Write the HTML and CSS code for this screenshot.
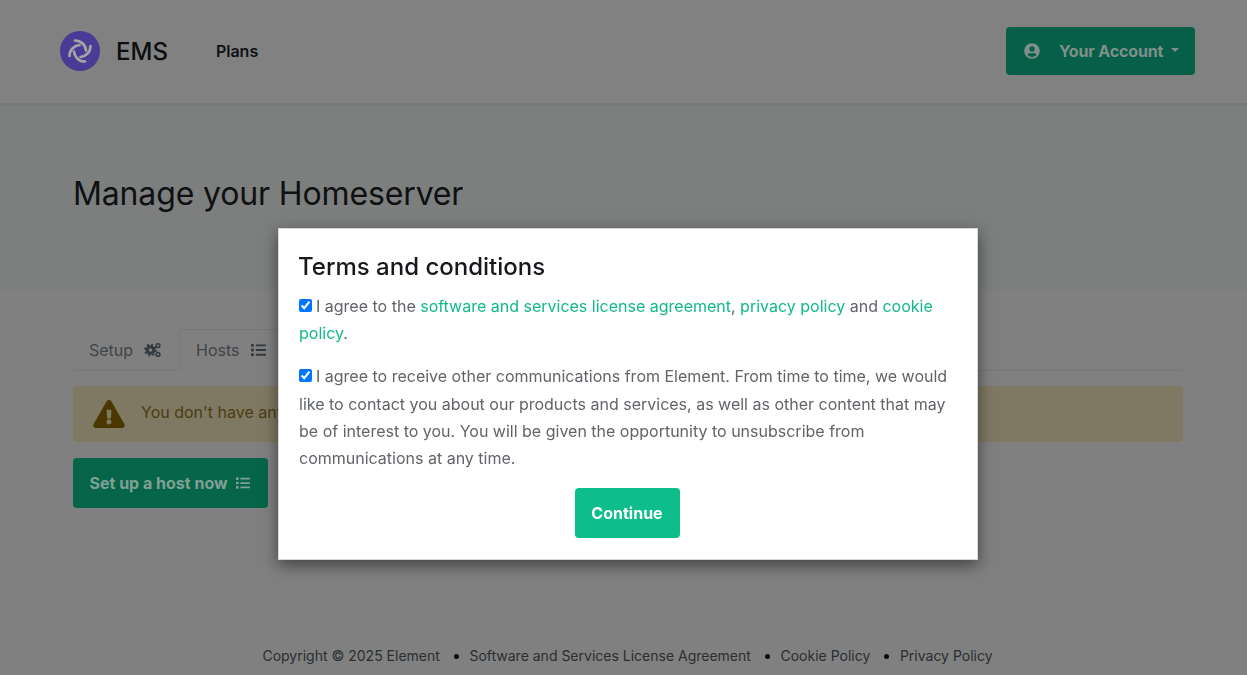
FILE: index.html
```html
<!DOCTYPE html>
<html lang="en">
<head>
<meta charset="utf-8">
<title>Manage your Homeserver</title>
<link rel="stylesheet" href="styles.css">
</head>
<body>
<div class="page">
  <header class="topbar">
    <a class="brand" href="#">
      <svg class="logo" viewBox="0 0 40 40"><circle cx="20" cy="20" r="20" fill="#4c3b96"/><g fill="none" stroke="#a5a5a5" stroke-width="2.7" stroke-linecap="round"><path d="M15 9.5A11 11 0 0 1 26 19.5"/><path d="M30.5 15A11 11 0 0 1 20.5 26"/><path d="M25 30.5A11 11 0 0 1 14 20.5"/><path d="M9.5 25A11 11 0 0 1 19.5 14"/></g></svg>
      <span class="brand-name">EMS</span>
    </a>
    <a class="nav-link" href="#">Plans</a>
    <button class="account" type="button">
      <svg class="user-icon" viewBox="0 0 496 512"><path fill="currentColor" d="M248 8C111 8 0 119 0 256s111 248 248 248 248-111 248-248S385 8 248 8zm0 96c48.6 0 88 39.4 88 88s-39.4 88-88 88-88-39.4-88-88 39.4-88 88-88zm0 344c-58.7 0-111.3-26.6-146.5-68.2 18.8-35.4 55.6-59.8 98.5-59.8 2.4 0 4.8.4 7.1 1.1 13 4.2 26.6 6.9 40.9 6.9 14.3 0 28-2.7 40.9-6.9 2.3-.7 4.7-1.1 7.1-1.1 42.9 0 79.7 24.4 98.5 59.8C359.3 421.4 306.7 448 248 448z"/></svg>
      <span class="account-label">Your Account</span>
      <i class="caret"></i>
    </button>
  </header>
  <section class="hero">
    <h1 class="title">Manage your Homeserver</h1>
  </section>
  <main class="content">
    <nav class="tabs">
      <a class="tab" href="#">Setup
        <svg class="tab-icon" viewBox="0 0 18 16"><g fill="none" stroke="#33393d"><circle cx="6.5" cy="8" r="3.3" stroke-width="3"/><circle cx="6.5" cy="8" r="5.4" stroke-width="2" stroke-dasharray="2 2.24"/><circle cx="14" cy="3.6" r="1.9" stroke-width="1.5"/><circle cx="14" cy="12.4" r="1.9" stroke-width="1.5"/></g></svg>
      </a>
      <a class="tab active" href="#">Hosts
        <svg class="tab-icon list" viewBox="0 0 512 512"><path fill="currentColor" d="M80 368H16a16 16 0 0 0-16 16v64a16 16 0 0 0 16 16h64a16 16 0 0 0 16-16v-64a16 16 0 0 0-16-16zm0-320H16A16 16 0 0 0 0 64v64a16 16 0 0 0 16 16h64a16 16 0 0 0 16-16V64a16 16 0 0 0-16-16zm0 160H16a16 16 0 0 0-16 16v64a16 16 0 0 0 16 16h64a16 16 0 0 0 16-16v-64a16 16 0 0 0-16-16zm416 176H176a16 16 0 0 0-16 16v32a16 16 0 0 0 16 16h320a16 16 0 0 0 16-16v-32a16 16 0 0 0-16-16zm0-320H176a16 16 0 0 0-16 16v32a16 16 0 0 0 16 16h320a16 16 0 0 0 16-16V80a16 16 0 0 0-16-16zm0 160H176a16 16 0 0 0-16 16v32a16 16 0 0 0 16 16h320a16 16 0 0 0 16-16v-32a16 16 0 0 0-16-16z"/></svg>
      </a>
    </nav>
    <div class="alert">
      <svg class="warn" viewBox="0 0 576 512"><path fill="currentColor" d="M569.517 440.013C587.975 472.007 564.806 512 527.94 512H48.054c-36.937 0-59.999-40.055-41.577-71.987L246.423 23.985c18.467-32.009 64.72-31.951 83.154 0l239.94 416.028zM288 354c-25.405 0-46 20.595-46 46s20.595 46 46 46 46-20.595 46-46-20.595-46-46-46zm-43.673-165.346l7.418 136c.347 6.364 5.609 11.346 11.982 11.346h48.546c6.373 0 11.635-4.982 11.982-11.346l7.418-136c.375-6.874-5.098-12.654-11.982-12.654h-63.383c-6.884 0-12.356 5.78-11.981 12.654z"/></svg>
      <span class="alert-text">You don't have any hosts yet.</span>
    </div>
    <button class="setup" type="button">Set up a host now
      <svg class="setup-icon" viewBox="0 0 512 512"><path fill="currentColor" d="M80 368H16a16 16 0 0 0-16 16v64a16 16 0 0 0 16 16h64a16 16 0 0 0 16-16v-64a16 16 0 0 0-16-16zm0-320H16A16 16 0 0 0 0 64v64a16 16 0 0 0 16 16h64a16 16 0 0 0 16-16V64a16 16 0 0 0-16-16zm0 160H16a16 16 0 0 0-16 16v64a16 16 0 0 0 16 16h64a16 16 0 0 0 16-16v-64a16 16 0 0 0-16-16zm416 176H176a16 16 0 0 0-16 16v32a16 16 0 0 0 16 16h320a16 16 0 0 0 16-16v-32a16 16 0 0 0-16-16zm0-320H176a16 16 0 0 0-16 16v32a16 16 0 0 0 16 16h320a16 16 0 0 0 16-16V80a16 16 0 0 0-16-16zm0 160H176a16 16 0 0 0-16 16v32a16 16 0 0 0 16 16h320a16 16 0 0 0 16-16v-32a16 16 0 0 0-16-16z"/></svg>
    </button>
  </main>
  <footer class="footer">
    <span>Copyright © 2025 Element</span><i class="dot"></i>
    <a href="#">Software and Services License Agreement</a><i class="dot"></i>
    <a href="#">Cookie Policy</a><i class="dot"></i>
    <a href="#">Privacy Policy</a>
  </footer>
</div>
<div class="overlay">
  <section class="modal">
    <h2 class="modal-title">Terms and conditions</h2>
    <p class="terms"><input class="check" type="checkbox" checked> I agree to the <a href="#">software and services license agreement</a>, <a href="#">privacy policy</a> and <a href="#">cookie policy</a>.</p>
    <p class="terms"><input class="check" type="checkbox" checked> I agree to receive other communications from Element. From time to time, we would like to contact you about our products and services, as well as other content that may be of interest to you. You will be given the opportunity to unsubscribe from communications at any time.</p>
    <div class="modal-actions"><button class="continue" type="button">Continue</button></div>
  </section>
</div>
</body>
</html>
```
FILE: styles.css
```css
* { box-sizing: border-box; }
html, body { margin: 0; height: 100%; overflow: hidden; }
body { background: #808080; font-family: Inter, "Liberation Sans", sans-serif; color: #101214; }
a { text-decoration: none; color: inherit; }
button { font-family: inherit; border: 0; }

.page { height: 675px; display: flex; flex-direction: column; }
.topbar { height: 105px; flex: none; display: flex; align-items: center; padding: 0 52px 1px 60px; border-bottom: 2px solid #74787a; background: #818181; }
.brand { display: flex; align-items: center; gap: 16px; }
.logo { width: 40px; height: 40px; display: block; }
.brand-name { font-size: 24px; font-weight: 500; color: #0c0e10; }
.nav-link { margin-left: 48px; font-size: 16px; font-weight: 600; color: #0f1113; }
.account { margin-left: auto; width: 189px; height: 48px; background: #065f46; color: #7f908b; border-radius: 4px; display: flex; align-items: center; padding: 0 18px; font-size: 16px; font-weight: 700; white-space: nowrap; }
.account-label { letter-spacing: -.15px; }
.user-icon { width: 16px; height: 16px; margin-right: 19px; flex: none; }
.caret { margin-left: 8px; margin-top: -2px; border-top: 4px solid currentColor; border-left: 4px solid transparent; border-right: 4px solid transparent; }

.hero { height: 185px; flex: none; padding: 70px 64px 0 73px; background: #7c7f7e; }
.title { margin: 0; font-size: 32px; line-height: 38px; font-weight: 400; letter-spacing: -.14px; color: #0e1012; }
.content { flex: 1; padding: 39px 64px 0 73px; }
.tabs { height: 42px; display: flex; border-bottom: 1px solid #74797c; }
.tab { display: flex; align-items: center; gap: 11px; padding: 0 16px 0 15px; height: 42px; font-size: 16px; color: #3f4448; border: 1px solid transparent; border-radius: 4px 4px 0 0; }
.tab.active { border-color: #74797c #74797c #808080; background: #808080; padding-left: 16px; }
.tab-icon { width: 18px; height: 16px; color: #33393d; }
.tab-icon.list { width: 15px; }
.alert { margin-top: 15px; height: 56px; display: flex; align-items: center; padding: 0 20px; gap: 16px; background: #7f7964; border-radius: 4px; color: #4a3c12; font-size: 16px; }
.alert-text { margin-bottom: 4px; }
.warn { width: 32px; height: 28px; color: #4a3800; }
.setup { margin-top: 16px; width: 195px; height: 50px; background: #066548; color: #80a096; border-radius: 4px; display: flex; align-items: center; padding: 0 16.5px; gap: 8px; font-size: 16px; font-weight: 700; white-space: nowrap; }
.setup-icon { width: 14px; height: 14px; flex: none; }

.footer { height: 38px; flex: none; display: flex; justify-content: center; gap: 12.3px; align-items: flex-start; padding: 10px 0 0 8px; font-size: 14px; color: #2a2e31; }
.dot { width: 5px; height: 5px; margin: 7px -1.5px 0 1.5px; border-radius: 50%; background: #0b0d0f; }

.overlay { position: fixed; inset: 0; padding: 228px 0 0 9px; display: flex; justify-content: center; align-items: flex-start; }
.modal { width: 700px; height: 332px; background: #fff; padding: 21px 20px; border: 1px solid #d8d8d8; box-shadow: 0 5px 15px rgba(0,0,0,.5); }
.modal-title { margin: 0 0 10px -1px; font-size: 24px; line-height: 33px; font-weight: 500; color: #16181b; }
.terms { margin: 0 0 16px; font-size: 16px; line-height: 27.2px; color: #616468; }
.terms a { color: #12b98a; }
.check { width: 13px; height: 13px; margin: 0 -.5px 0 0; vertical-align: 0; accent-color: #0075ff; }
.modal-actions { display: flex; justify-content: center; padding-right: 2px; }
.continue { width: 105px; height: 50px; background: #0dbd8b; color: #fff; border-radius: 4px; font-size: 16px; font-weight: 700; }
```
